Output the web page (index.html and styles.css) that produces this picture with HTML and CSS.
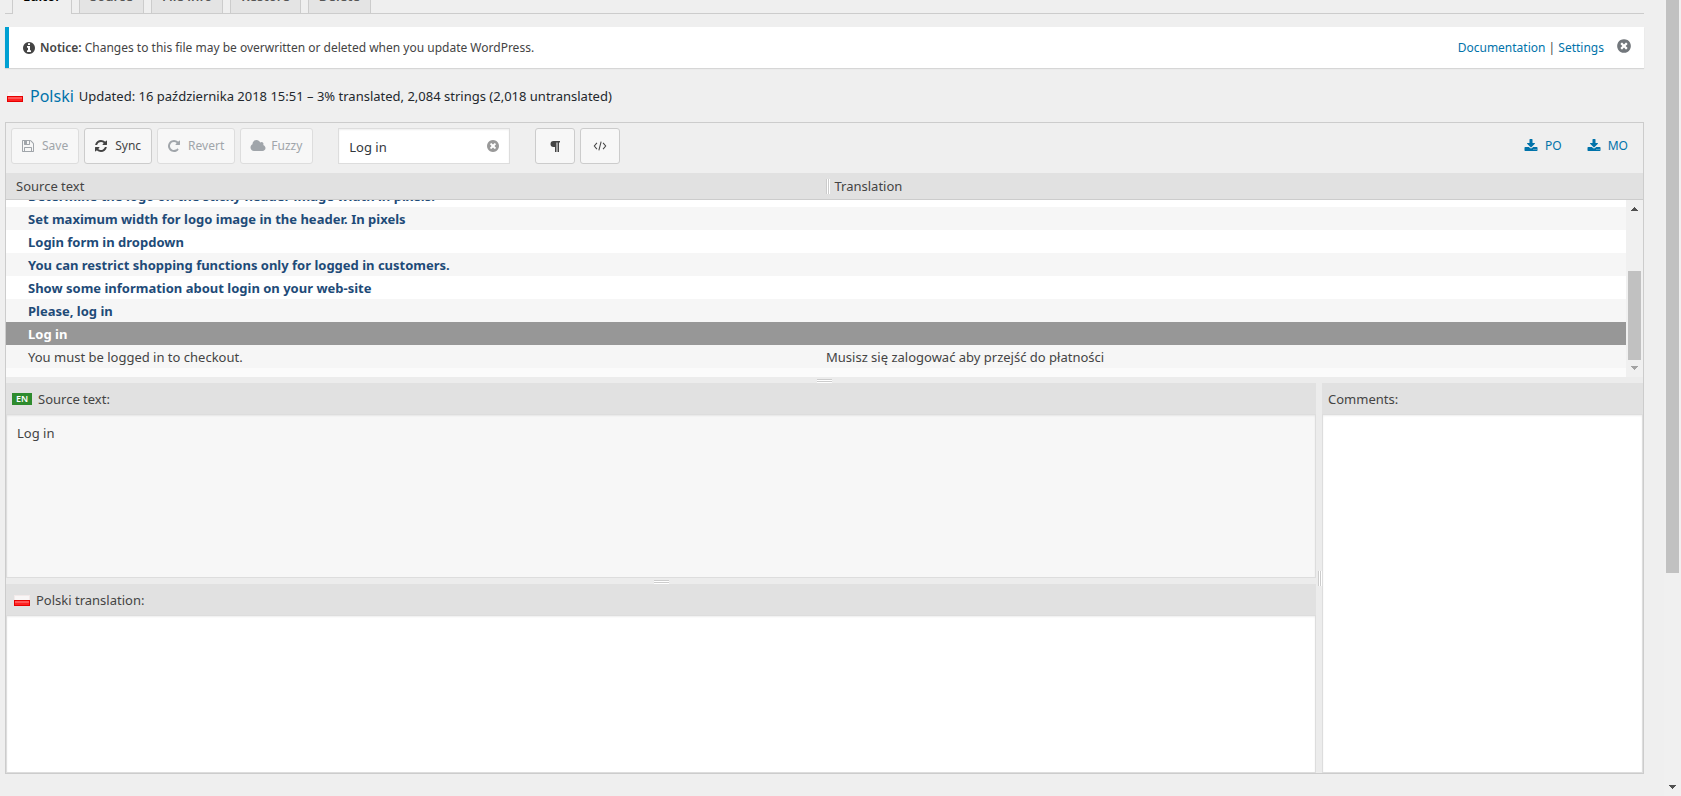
FILE: index.html
```
<!DOCTYPE html>
<html lang="en">
<head>
<meta charset="utf-8">
<title>Polski – Editor</title>
<link rel="stylesheet" href="styles.css">
</head>
<body>
<svg class="sprite" aria-hidden="true">
  <symbol id="save" viewBox="0 0 1792 1792"><path d="M512 1536h768v-384h-768v384zm896 0h128v-896q0-14-10-38.500t-20-34.500l-281-281q-10-10-34-20t-39-10v416q0 40-28 68t-68 28h-576q-40 0-68-28t-28-68v-416h-128v1280h128v-416q0-40 28-68t68-28h832q40 0 68 28t28 68v416zm-384-928v-320q0-13-9.500-22.500t-22.500-9.500h-192q-13 0-22.500 9.500t-9.500 22.500v320q0 13 9.500 22.500t22.500 9.500h192q13 0 22.500-9.500t9.500-22.500zm640 32v928q0 40-28 68t-68 28h-1344q-40 0-68-28t-28-68v-1344q0-40 28-68t68-28h928q40 0 88 20t76 48l280 280q28 28 48 76t20 88z"/></symbol>
  <symbol id="sync" viewBox="0 0 1792 1792"><path d="M1639 1056q0 5-1 7-64 268-268 434.500t-478 166.500q-146 0-282.500-55t-243.500-157l-129 129q-19 19-45 19t-45-19-19-45v-448q0-26 19-45t45-19h448q26 0 45 19t19 45-19 45l-137 137q71 66 161 102t187 36q134 0 250-65t186-179q11-17 53-117 8-23 30-23h192q13 0 22.500 9.500t9.500 22.500zm25-800v448q0 26-19 45t-45 19h-448q-26 0-45-19t-19-45 19-45l138-138q-148-137-349-137-134 0-250 65t-186 179q-11 17-53 117-8 23-30 23h-199q-13 0-22.500-9.500t-9.500-22.500v-7q65-268 270-434.500t480-166.500q146 0 284 55.500t245 156.500l130-129q19-19 45-19t45 19 19 45z"/></symbol>
  <symbol id="revert" viewBox="0 0 1792 1792"><path d="M1664 256v448q0 26-19 45t-45 19h-448q-42 0-59-40-17-39 14-69l138-138q-148-137-349-137-104 0-198.500 40.500t-163.500 109.500-109.500 163.500-40.500 198.500 40.500 198.500 109.500 163.500 163.500 109.500 198.500 40.500q119 0 225-52t179-147q7-10 23-12 15 0 25 9l137 138q9 8 9.500 20.500t-7.500 22.500q-109 132-264 204.500t-327 72.500q-156 0-298-61t-245-164-164-245-61-298 61-298 164-245 245-164 298-61q147 0 284.500 55.500t244.500 156.500l130-129q29-31 70-14 39 17 39 59z"/></symbol>
  <symbol id="cloud" viewBox="0 0 2048 1792"><path d="M1984 1152q0 159-112.500 271.500t-271.500 112.500h-1088q-185 0-316.500-131.500t-131.500-316.500q0-132 71-241.500t187-163.500q-2-28-2-43 0-212 150-362t362-150q158 0 286.500 88t187.500 230q70-62 166-62 106 0 181 75t75 181q0 75-41 138 129 30 213 134.500t84 239.500z"/></symbol>
  <symbol id="download" viewBox="0 0 1792 1792"><path d="M1344 1344q0-26-19-45t-45-19-45 19-19 45 19 45 45 19 45-19 19-45zm256 0q0-26-19-45t-45-19-45 19-19 45 19 45 45 19 45-19 19-45zm128-224v320q0 40-28 68t-68 28h-1472q-40 0-68-28t-28-68v-320q0-40 28-68t68-28h465l135 136q58 56 136 56t136-56l136-136h464q40 0 68 28t28 68zm-325-569q17 41-14 70l-448 448q-18 19-45 19t-45-19l-448-448q-31-29-14-70 17-39 59-39h256v-448q0-26 19-45t45-19h256q26 0 45 19t19 45v448h256q42 0 59 39z"/></symbol>
  <symbol id="close" viewBox="0 0 1792 1792"><path d="M1277 1122q0-26-19-45l-181-181 181-181q19-19 19-45 0-27-19-46l-90-90q-19-19-46-19-26 0-45 19l-181 181-181-181q-19-19-45-19-27 0-46 19l-90 90q-19 19-19 46 0 26 19 45l181 181-181 181q-19 19-19 45 0 27 19 46l90 90q19 19 46 19 26 0 45-19l181-181 181 181q19 19 45 19 27 0 46-19l90-90q19-19 19-46zm387-226q0 209-103 385.500t-279.500 279.500-385.500 103-385.500-103-279.500-279.500-103-385.500 103-385.500 279.500-279.500 385.500-103 385.500 103 279.500 279.500 103 385.500z"/></symbol>
  <symbol id="info" viewBox="0 0 1792 1792"><path d="M1152 1376v-160q0-14-9-23t-23-9h-96v-512q0-14-9-23t-23-9h-320q-14 0-23 9t-9 23v160q0 14 9 23t23 9h96v320h-96q-14 0-23 9t-9 23v160q0 14 9 23t23 9h448q14 0 23-9t9-23zm-128-896v-160q0-14-9-23t-23-9h-192q-14 0-23 9t-9 23v160q0 14 9 23t23 9h192q14 0 23-9t9-23zm640 416q0 209-103 385.500t-279.500 279.500-385.500 103-385.500-103-279.500-279.500-103-385.500 103-385.500 279.500-279.500 385.500-103 385.500 103 279.500 279.500 103 385.500z"/></symbol>
  <symbol id="pilcrow" viewBox="0 0 14 14"><path d="M5.500 2H12v1.500h-1V13H9.500V3.500h-1V13H7V8H5.500a3 3 0 0 1 0-6z"/></symbol>
  <symbol id="code" viewBox="0 0 16 14"><path d="M4.500 3.500 1.500 7l3 3.500M11.500 3.500l3 3.500-3 3.500M9.300 2 6.700 12" fill="none" stroke="currentColor" stroke-width="1.200"/></symbol>
  <symbol id="flag" viewBox="0 0 16 11"><path fill="#f3eaea" d="M0 0h16v5H0z"/><path fill="#f9f6f6" d="M1 1h14v4H1z"/><path fill="#e60000" d="M0 5h16v6H0z"/><path fill="#f55" d="M1 6h14v3H1z"/><path fill="#f22" d="M1 8h14v2H1z"/></symbol>
  <symbol id="up" viewBox="0 0 7 4"><path d="M3 0h1v1h1v1h1v1h1v1H0V3h1V2h1V1h1z"/></symbol>
  <symbol id="down" viewBox="0 0 7 4"><path d="M0 0h7v1H6v1H5v1H4v1H3V3H2V2H1V1H0z"/></symbol>
</svg>

<main class="page">
  <nav class="tabs">
    <a class="tab active" href="#">Editor</a>
    <a class="tab" href="#">Source</a>
    <a class="tab" href="#">File info</a>
    <a class="tab" href="#">Restore</a>
    <a class="tab" href="#">Delete</a>
  </nav>

  <section class="notice">
    <svg class="icon"><use href="#info"/></svg>
    <p class="notice-text"><strong>Notice:</strong> Changes to this file may be overwritten or deleted when you update WordPress.</p>
    <p class="notice-links"><a href="#">Documentation</a> | <a href="#">Settings</a></p>
    <button class="dismiss" type="button" aria-label="Dismiss"><svg class="icon-large"><use href="#close"/></svg></button>
  </section>

  <header class="summary">
    <svg class="flag"><use href="#flag"/></svg>
    <h1 class="locale">Polski</h1>
    <p class="status">Updated: 16 października 2018 15:51 – 3% translated, 2,084 strings (2,018 untranslated)</p>
  </header>

  <section class="editor">
    <div class="toolbar">
      <button class="button" type="button" disabled><svg class="icon"><use href="#save"/></svg>Save</button>
      <button class="button" type="button"><svg class="icon"><use href="#sync"/></svg>Sync</button>
      <button class="button" type="button" disabled><svg class="icon"><use href="#revert"/></svg>Revert</button>
      <button class="button fuzzy" type="button" disabled><svg class="icon"><use href="#cloud"/></svg>Fuzzy</button>
      <div class="search">
        <input class="search-input" type="text" value="Log in" aria-label="Filter translations">
        <button class="clear" type="button" aria-label="Clear filter"><svg class="icon"><use href="#close"/></svg></button>
      </div>
      <button class="button square" type="button" aria-label="Toggle invisibles"><svg class="icon"><use href="#pilcrow"/></svg></button>
      <button class="button square" type="button" aria-label="Toggle code view"><svg class="icon"><use href="#code"/></svg></button>
      <div class="downloads">
        <a class="download" href="#"><svg class="icon"><use href="#download"/></svg>PO</a>
        <a class="download" href="#"><svg class="icon"><use href="#download"/></svg>MO</a>
      </div>
    </div>

    <div class="list">
      <table class="strings">
        <thead class="strings-head">
          <tr class="row"><th class="cell">Source text</th><th class="cell"><span class="grip grip-column"></span>Translation</th></tr>
        </thead>
        <tbody class="strings-body">
          <tr class="row"><td class="cell">Determine the logo on the sticky header image width in pixels.</td><td class="cell"></td></tr>
          <tr class="row"><td class="cell">Set maximum width for logo image in the header. In pixels</td><td class="cell"></td></tr>
          <tr class="row"><td class="cell">Login form in dropdown</td><td class="cell"></td></tr>
          <tr class="row"><td class="cell">You can restrict shopping functions only for logged in customers.</td><td class="cell"></td></tr>
          <tr class="row"><td class="cell">Show some information about login on your web-site</td><td class="cell"></td></tr>
          <tr class="row"><td class="cell">Please, log in</td><td class="cell"></td></tr>
          <tr class="row selected"><td class="cell">Log in</td><td class="cell"></td></tr>
          <tr class="row done"><td class="cell">You must be logged in to checkout.</td><td class="cell">Musisz się zalogować aby przejść do płatności</td></tr>
        </tbody>
      </table>
      <div class="scrollbar list-scrollbar">
        <svg class="arrow"><use href="#up"/></svg>
        <div class="thumb"></div>
        <svg class="arrow faded"><use href="#down"/></svg>
      </div>
    </div>

    <div class="splitter"><span class="grip grip-row"></span></div>

    <div class="panes">
      <div class="pane-stack">
        <div class="pane source">
          <label class="pane-title" for="source"><span class="badge">EN</span>Source text:</label>
          <textarea class="pane-text" id="source" readonly>Log in</textarea>
        </div>
        <div class="splitter"><span class="grip grip-row"></span></div>
        <div class="pane translation">
          <label class="pane-title flagged" for="translation"><svg class="flag"><use href="#flag"/></svg>Polski translation:</label>
          <textarea class="pane-text" id="translation"></textarea>
        </div>
      </div>
      <div class="splitter vertical"><span class="grip grip-column"></span></div>
      <div class="pane comments">
        <label class="pane-title" for="comments">Comments:</label>
        <textarea class="pane-text" id="comments"></textarea>
      </div>
    </div>
  </section>
</main>

<div class="scrollbar page-scrollbar">
  <div class="thumb"></div>
  <svg class="arrow"><use href="#down"/></svg>
</div>
</body>
</html>
```

FILE: styles.css
```
* {
  box-sizing: border-box;
}

body {
  margin: 0;
  display: flex;
  height: 100vh;
  overflow: hidden;
  background: #efefef;
  color: #444;
  font-family: "Noto Sans", "Open Sans", sans-serif;
  font-size: 13px;
  line-height: 20px;
}

p, h1 {
  margin: 0;
}

a {
  color: #0073aa;
  text-decoration: none;
}

button, input, textarea {
  font: inherit;
  color: inherit;
}

button {
  padding: 0;
  border: 0;
  background: none;
}

svg {
  display: block;
  flex: none;
  fill: currentColor;
}

.sprite {
  position: absolute;
  width: 0;
  height: 0;
}

.icon {
  width: 14px;
  height: 14px;
}

.icon-large {
  width: 16px;
  height: 16px;
}

.flag {
  width: 16px;
  height: 11px;
}

.page {
  flex: 1;
  min-width: 0;
  display: flex;
  flex-direction: column;
  padding: 0 20px 22px 5px;
}

/* Tabs */

.tabs {
  display: flex;
  gap: 7px;
  margin-top: -22px;
  padding-left: 7px;
  border-bottom: 1px solid #ccc;
}

.tab {
  padding: 5px 10px;
  border: 1px solid #ccc;
  border-bottom: 0;
  background: #e4e4e4;
  color: #555;
  font-weight: 600;
  line-height: 24px;
}

.tab.active {
  margin-bottom: -1px;
  background: #efefef;
  color: #000;
}

/* Notice */

.notice {
  display: flex;
  align-items: center;
  margin-top: 13px;
  padding: 0 12px 0 13px;
  min-height: 41px;
  border-left: 4px solid #00a0d2;
  background: #fff;
  box-shadow: 0 1px 1px rgba(0, 0, 0, 0.1);
  font-size: 12px;
}

.notice-text {
  margin-left: 4px;
}

.notice strong {
  font-weight: 600;
}

.notice-links {
  margin-left: auto;
}

.dismiss {
  margin: 0 0 4px 12px;
  color: #72777c;
}

/* Summary */

.summary {
  display: flex;
  align-items: center;
  height: 54px;
  padding: 2px 0 0 2px;
  color: #23282d;
}

.locale {
  margin: 0 5px 0 7px;
  color: #0073aa;
  font-size: 16px;
  font-weight: 400;
}

/* Editor frame */

.editor {
  flex: 1;
  min-height: 0;
  display: flex;
  flex-direction: column;
  border: 1px solid #ccc;
}

.toolbar {
  display: flex;
  gap: 5px;
  padding: 5px 15px 9px 5px;
  font-size: 12px;
}

.button {
  display: flex;
  align-items: center;
  gap: 7px;
  height: 36px;
  padding: 0 10px 0 9px;
  border: 1px solid #ccc;
  border-radius: 3px;
  background: #f7f7f7;
}

.button:disabled {
  border-color: #ddd;
  color: #a0a5aa;
}

.fuzzy {
  gap: 5px;
}

.fuzzy .icon {
  width: 16px;
}

.square {
  width: 40px;
  padding: 0;
  justify-content: center;
}

.search {
  position: relative;
  width: 172px;
  margin: 0 20px;
}

.search-input {
  width: 100%;
  height: 36px;
  padding: 2px 32px 0 10px;
  border: 1px solid #ddd;
  background: #fff;
  box-shadow: inset 0 1px 2px rgba(0, 0, 0, 0.07);
  color: #32373c;
  font-size: 13px;
}

.clear {
  position: absolute;
  top: 11px;
  right: 10px;
  color: #999;
}

.downloads {
  display: flex;
  align-items: center;
  gap: 25px;
  margin-left: auto;
}

.download {
  display: flex;
  align-items: center;
  gap: 7px;
}

/* Strings list */

.list {
  position: relative;
}

.strings, .strings-head {
  display: block;
}

.row {
  display: grid;
  grid-template-columns: 1fr 1fr;
}

.strings-head {
  border-bottom: 1px solid #ccc;
  background: #e1e1e1;
}

.strings-head .cell {
  display: flex;
  align-items: center;
  gap: 6px;
  padding: 3px 0 3px 10px;
  font-weight: 400;
  text-align: left;
}

.strings-head .cell + .cell {
  padding-left: 1px;
}

.strings-body {
  display: block;
  height: 177px;
  padding-right: 17px;
  overflow: hidden;
  background: #fbfbfb;
}

.strings-body .row {
  height: 23px;
  background: #f6f6f6;
  color: #1e4b78;
  font-weight: 700;
}

.strings-body .row:nth-child(odd) {
  background: #fff;
}

.strings-body .row:first-child {
  margin-top: -16px;
}

.strings-body .row.selected {
  background: #979797;
  color: #fff;
}

.strings-body .row.done {
  color: #444;
  font-weight: 400;
}

.strings-body .cell {
  padding: 2px 0 0 22px;
  line-height: 20px;
}

.strings-body .cell + .cell {
  padding-left: 10px;
}

/* Scrollbars */

.scrollbar {
  display: flex;
  flex-direction: column;
  align-items: center;
  width: 17px;
  background: #f0f0f0;
  color: #505050;
}

.thumb {
  width: 13px;
  background: #c1c1c1;
}

.arrow {
  width: 7px;
  height: 4px;
}

.faded {
  color: #a3a3a3;
}

.list-scrollbar {
  position: absolute;
  top: 27px;
  right: 0;
  bottom: 0;
  padding: 7px 0;
}

.list-scrollbar .thumb {
  height: 89px;
  margin: auto 0 6px;
}

.page-scrollbar {
  justify-content: space-between;
  padding-bottom: 7px;
}

.page-scrollbar .thumb {
  height: 573px;
}

/* Splitters */

.splitter {
  flex: none;
  display: flex;
  align-items: center;
  justify-content: center;
  height: 6px;
  background: #ececec;
}

.splitter.vertical {
  width: 6px;
  height: auto;
}

.grip {
  display: block;
  border: 1px solid #ccc;
  background: #fff;
}

.grip-row {
  width: 15px;
  height: 3px;
  border-width: 1px 0;
  box-shadow: 0 1px #fff;
}

.grip-column {
  width: 3px;
  height: 15px;
  border-width: 0 1px;
  box-shadow: 1px 0 #fff;
}

/* Panes */

.panes {
  flex: 1;
  min-height: 0;
  display: flex;
}

.pane-stack {
  flex: 1310;
  min-width: 0;
  display: flex;
  flex-direction: column;
}

.pane {
  min-width: 0;
  min-height: 0;
  display: flex;
  flex-direction: column;
}

.source {
  flex: 195;
}

.translation {
  flex: 189;
}

.comments {
  flex: 321;
}

.pane-title {
  display: flex;
  align-items: center;
  gap: 6px;
  height: 31px;
  padding: 1px 6px 0;
  background: #e1e1e1;
}

.flagged {
  padding-left: 8px;
}

.badge {
  width: 20px;
  background: #2e8b2e;
  color: #fff;
  font-size: 9px;
  font-weight: 600;
  line-height: 12px;
  text-align: center;
}

.pane-text {
  flex: 1;
  min-height: 0;
  width: 100%;
  padding: 8px 10px;
  border: 1px solid #ddd;
  border-radius: 0;
  background: #fff;
  box-shadow: inset 0 1px 2px rgba(0, 0, 0, 0.07);
  resize: none;
  outline: 0;
}

.source .pane-text {
  background: #f7f7f7;
}
```
